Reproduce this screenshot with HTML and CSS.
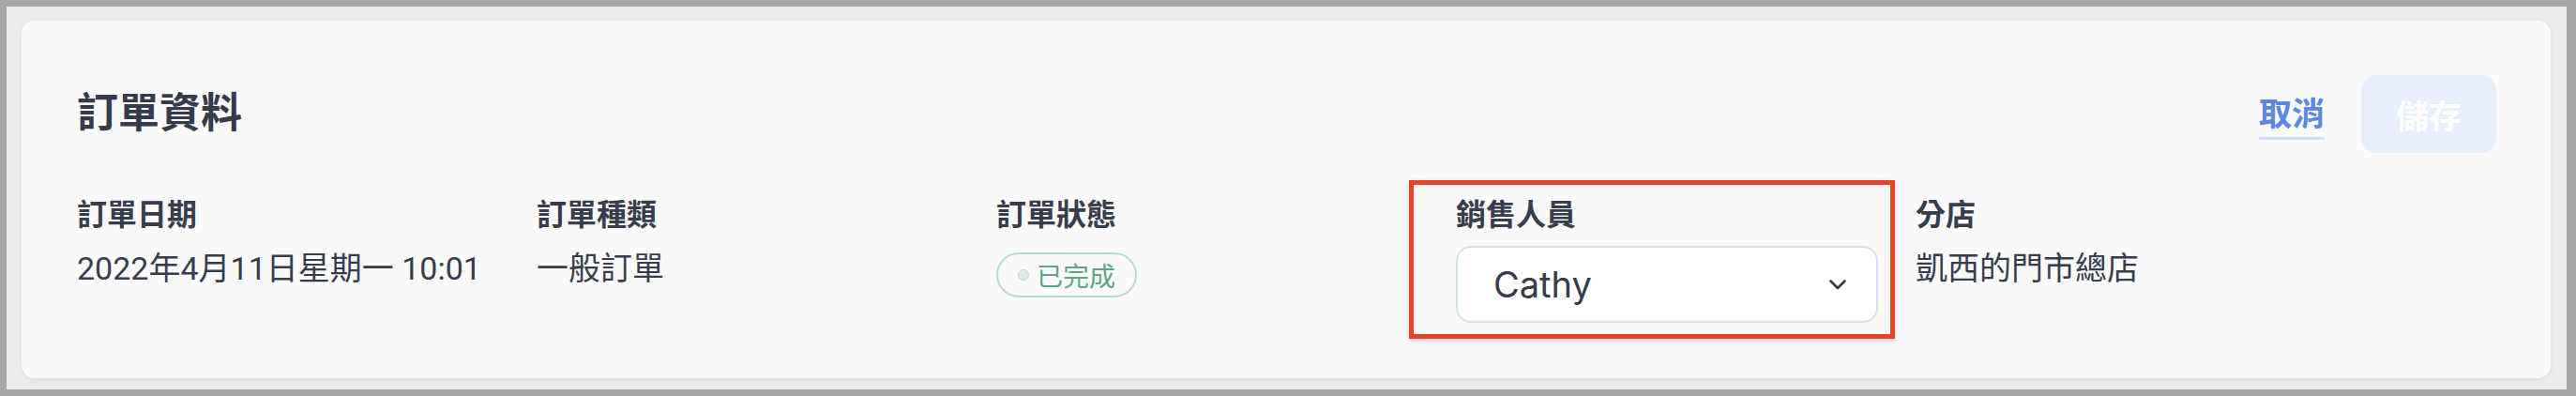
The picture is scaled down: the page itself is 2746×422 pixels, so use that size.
FILE: index.html
```html
<!DOCTYPE html>
<html lang="zh-Hant">
<head>
  <meta charset="UTF-8">
  <meta name="viewport" content="width=device-width, initial-scale=1.0">
  <title>訂單資料</title>
  <link rel="stylesheet" href="styles.css">
</head>
<body>
  <div class="page">
    <section class="card">
      <div class="card-header">
        <h1 class="card-title">訂單資料</h1>
        <div class="actions">
          <a href="#" class="btn-link">取消</a>
          <button class="btn-save" disabled>儲存</button>
        </div>
      </div>

      <div class="fields">
        <div class="field">
          <div class="field-label">訂單日期</div>
          <div class="field-value">2022年4月11日星期一 10:01</div>
        </div>
        <div class="field">
          <div class="field-label">訂單種類</div>
          <div class="field-value">一般訂單</div>
        </div>
        <div class="field">
          <div class="field-label">訂單狀態</div>
          <span class="status-badge"><span class="status-dot"></span>已完成</span>
        </div>
        <div class="field field-highlight">
          <div class="field-label">銷售人員</div>
          <div class="select-box">
            <span>Cathy</span>
            <svg width="18" height="11" viewBox="0 0 18 11" aria-hidden="true">
              <path d="M1.5 1.5 L9 9 L16.5 1.5" fill="none" stroke="#363b4b" stroke-width="2.6" stroke-linecap="round" stroke-linejoin="round"/>
            </svg>
          </div>
          <div class="highlight-box"></div>
        </div>
        <div class="field">
          <div class="field-label">分店</div>
          <div class="field-value">凱西的門市總店</div>
        </div>
      </div>
    </section>
  </div>
</body>
</html>
```

FILE: styles.css
```css
html, body {
  height: 100%;
}
body {
  margin: 0;
  padding: 7px 10px 7px 7px;
  box-sizing: border-box;
  background-color: #a6a7a9;
  font-family: Roboto, "Noto Sans CJK TC", sans-serif;
  color: #383d4e;
}
.page {
  height: 100%;
  box-sizing: border-box;
  background-color: #ebecee;
  padding: 15px 17px 13px 16px;
}
.card {
  background-color: #fafafa;
  border-radius: 14px;
  box-shadow: 0 2px 6px rgba(0, 0, 0, 0.07);
  padding: 58px 58px 59px 59px;
}
.card-header {
  display: flex;
  justify-content: space-between;
  align-items: center;
  height: 83px;
  margin-bottom: 41px;
}
.card-title {
  margin: 0 0 8px 0;
  font-family: "Noto Sans CJK TC", sans-serif;
  font-size: 44px;
  font-weight: 700;
  line-height: 1.2;
  color: #363b4c;
}
.actions {
  display: flex;
  align-items: center;
  gap: 39px;
}
.btn-link {
  font-family: "Noto Sans CJK TC", sans-serif;
  font-size: 35px;
  font-weight: 700;
  line-height: 38px;
  color: #5b88e0;
  text-decoration: none;
  padding-bottom: 8px;
  border-bottom: 3px solid #d2dff8;
  margin-top: 5px;
}
.btn-save {
  height: 83px;
  padding: 0 37px;
  border: none;
  border-radius: 16px;
  background-color: #e8effc;
  color: #ffffff;
  font-family: "Noto Sans CJK TC", sans-serif;
  font-size: 35px;
  font-weight: 700;
}
.fields {
  display: grid;
  grid-template-columns: repeat(5, 450px);
  column-gap: 40px;
}
.field {
  position: relative;
}
.field-label {
  font-family: "Noto Sans CJK TC", sans-serif;
  font-size: 32px;
  font-weight: 700;
  line-height: 44px;
  margin-bottom: 14px;
}
.field-value {
  font-size: 34px;
  line-height: 48px;
}
.status-badge {
  display: inline-flex;
  align-items: center;
  gap: 8px;
  height: 48px;
  box-sizing: border-box;
  margin-top: 7px;
  padding: 0 21px;
  border: 2px solid #b8dccc;
  border-radius: 999px;
  font-family: "Noto Sans CJK TC", sans-serif;
  font-size: 28px;
  color: #5fa586;
}
.status-dot {
  width: 12px;
  height: 12px;
  box-sizing: border-box;
  border-radius: 50%;
  background-color: #dcebe5;
  border: 1.5px solid #bcdccf;
}
.select-box {
  display: flex;
  justify-content: space-between;
  align-items: center;
  height: 82px;
  box-sizing: border-box;
  padding: 0 32px 0 38px;
  background-color: #ffffff;
  border: 2px solid #d8e0ea;
  border-radius: 16px;
  font-family: Inter, "Noto Sans CJK TC", sans-serif;
  font-size: 38px;
  color: #363b4b;
}
/* annotation frame drawn over the salesperson field */
.highlight-box {
  position: absolute;
  top: -12px;
  left: -50px;
  right: -18px;
  bottom: -17px;
  border: 5px solid #e4462c;
  box-shadow: 0 2px 4px rgba(0, 0, 0, 0.2);
  pointer-events: none;
}
```
